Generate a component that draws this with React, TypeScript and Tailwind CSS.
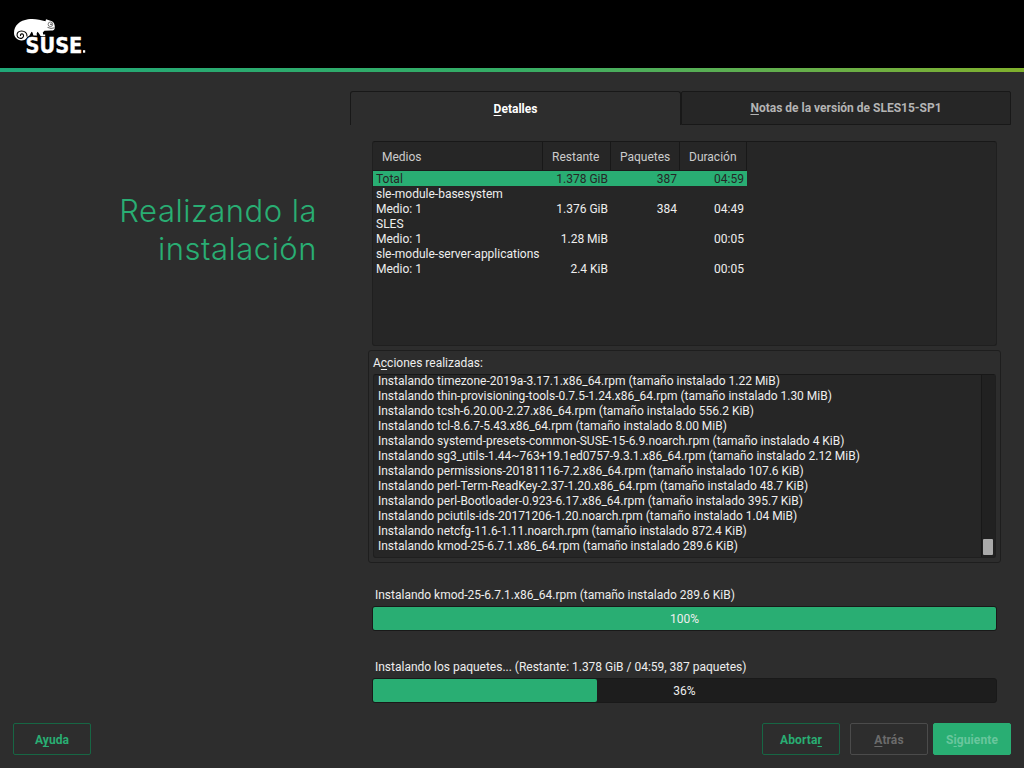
import type { ReactNode } from "react";

const mediaRows = [
  { name: "Total", size: "1.378 GiB", packages: "387", time: "04:59" },
  { name: "sle-module-basesystem", size: "", packages: "", time: "" },
  { name: "Medio: 1", size: "1.376 GiB", packages: "384", time: "04:49" },
  { name: "SLES", size: "", packages: "", time: "" },
  { name: "Medio: 1", size: "1.28 MiB", packages: "", time: "00:05" },
  { name: "sle-module-server-applications", size: "", packages: "", time: "" },
  { name: "Medio: 1", size: "2.4 KiB", packages: "", time: "00:05" },
];

const actions = [
  "Instalando timezone-2019a-3.17.1.x86_64.rpm (tamaño instalado 1.22 MiB)",
  "Instalando thin-provisioning-tools-0.7.5-1.24.x86_64.rpm (tamaño instalado 1.30 MiB)",
  "Instalando tcsh-6.20.00-2.27.x86_64.rpm (tamaño instalado 556.2 KiB)",
  "Instalando tcl-8.6.7-5.43.x86_64.rpm (tamaño instalado 8.00 MiB)",
  "Instalando systemd-presets-common-SUSE-15-6.9.noarch.rpm (tamaño instalado 4 KiB)",
  "Instalando sg3_utils-1.44~763+19.1ed0757-9.3.1.x86_64.rpm (tamaño instalado 2.12 MiB)",
  "Instalando permissions-20181116-7.2.x86_64.rpm (tamaño instalado 107.6 KiB)",
  "Instalando perl-Term-ReadKey-2.37-1.20.x86_64.rpm (tamaño instalado 48.7 KiB)",
  "Instalando perl-Bootloader-0.923-6.17.x86_64.rpm (tamaño instalado 395.7 KiB)",
  "Instalando pciutils-ids-20171206-1.20.noarch.rpm (tamaño instalado 1.04 MiB)",
  "Instalando netcfg-11.6-1.11.noarch.rpm (tamaño instalado 872.4 KiB)",
  "Instalando kmod-25-6.7.1.x86_64.rpm (tamaño instalado 289.6 KiB)",
];

function Key({ children }: { children: ReactNode }) {
  return <span className="underline decoration-1 underline-offset-2 [text-decoration-skip-ink:none]">{children}</span>;
}

function Logo() {
  return (
    <svg className="ml-3 mt-4 h-10 w-20" viewBox="12 16 80 40" role="img" aria-label="SUSE">
      <path
        fill="#fff"
        d="M14 33C14 25 20 20.500 28 19.200C34 18.300 40 19.500 45.500 21.200L46 19.200L52 21.200C54 22 55 24.800 54.800 28C54.700 29.700 53.500 30.500 51 30.600L44.500 30.800L42.800 32.500L43.200 34.500H45.200V36H40.500C39.500 34.500 39 33 37.500 31.800C36.500 33 36.500 34 37 35.500H33.500C32.500 33.500 33 32.500 31.500 31.800L29.500 35.600L27.200 37C26 39.500 24 40.400 21.500 40.400C17 40.200 14 37 14 33Z"
      />
      <path
        d="M27 36.500C27.200 33 24.800 31 21.500 31C18.200 31 16.700 33.200 17.100 35.600C17.500 38 20.300 39 22.200 37.900C24 36.900 24 34.200 22.200 33.900C20.700 33.700 20 35 20.800 36"
        fill="none"
        stroke="#000"
        strokeWidth="1.1"
      />
      <circle cx="50.400" cy="24.300" r="2.300" fill="#fff" stroke="#000" strokeWidth=".5" />
      <circle cx="51" cy="24.200" r=".7" fill="#000" />
      <path d="M54.500 27.800Q51 29.300 47.500 27.400" fill="none" stroke="#000" strokeWidth=".6" />
      <text
        x="25.500"
        y="52.500"
        textLength="56.800"
        lengthAdjust="spacingAndGlyphs"
        fill="#fff"
        stroke="#fff"
        strokeWidth=".4"
        fontFamily="DejaVu Sans, sans-serif"
        fontSize="20.500"
        fontWeight="700"
      >
        SUSE
      </text>
      <rect x="83" y="50.200" width="2.200" height="2.500" fill="#fff" />
    </svg>
  );
}

function Progress({ value }: { value: number }) {
  return (
    <div className="grid h-[25px] w-[625px] rounded-[3px] border border-[#191919] bg-[#1d1d1d]">
      <div
        className="col-start-1 row-start-1 rounded-[2px] bg-[#29ae73]"
        style={{ width: `${value}%` }}
      />
      <span className="z-10 col-start-1 row-start-1 pt-[5px] text-center leading-[15px] text-[#eeeeee]">{value}%</span>
    </div>
  );
}

const buttonBase = "flex h-8 w-[78px] items-center justify-center rounded-[2px] border pt-[2px] font-bold tracking-[0.1px]";

export default function App() {
  return (
    <div className="flex h-[768px] w-[1024px] flex-col overflow-hidden bg-[#2d2d2d] font-['Roboto',sans-serif] text-[12px] leading-[15px] text-[#eeeeee]">
      <header className="h-[68px] shrink-0 bg-black">
        <div className="flex">
          <Logo />
        </div>
      </header>
      <div className="h-1 shrink-0 bg-linear-to-r from-[#20a878] via-[#35ad65] to-[#80b02c]" />

      <div className="flex h-[651px] shrink-0">
        <aside className="w-[350px] shrink-0 pr-[33px] pt-[120px]">
          <h1 className="text-right font-['Inter',sans-serif] text-[31px] font-light leading-[38px] tracking-[0.5px] text-[#29ae73]">
            Realizando la
            <br />
            instalación
          </h1>
        </aside>

        <main className="w-[661px] pt-[19px]">
          <div className="flex h-[34px] font-bold">
            <div className="flex w-[331px] items-center justify-center rounded-t-[3px] border-x border-t border-[#181818] pt-px text-white">
              <span><Key>D</Key>etalles</span>
            </div>
            <div className="flex w-[330px] items-center justify-center rounded-t-[2px] border border-[#181818] bg-[#262626] text-[#b4b4b4]">
              <span><Key>N</Key>otas de la versión de SLES15-SP1</span>
            </div>
          </div>

          <div className="ml-[22px] mt-4 h-[205px] w-[625px] rounded-[3px] border border-[#1f1f1f] border-t-[#181818] bg-[#262626]">
            <div className="grid h-[29px] w-[374px] grid-cols-[170px_68px_69px_67px] border-b border-[#1b1b1b] text-[#cccccc]">
              {["Medios", "Restante", "Paquetes", "Duración"].map((title) => (
                <div key={title} className="flex items-center border-r border-[#181818] pl-[9px] pt-[2px]">
                  {title}
                </div>
              ))}
            </div>
            {mediaRows.map((row, i) => (
              <div
                key={i}
                className={
                  i === 0
                    ? "flex h-[15px] w-[374px] bg-[#29ae73] pt-px text-[#262626]"
                    : "flex h-[15px] w-[374px] pt-px"
                }
              >
                <span className="w-[170px] whitespace-nowrap pl-[3px]">{row.name}</span>
                <span className="w-[65px] text-right">{row.size}</span>
                <span className="w-[69px] text-right">{row.packages}</span>
                <span className="w-[67px] text-right">{row.time}</span>
              </div>
            ))}
          </div>

          <section className="ml-[18px] mt-1 h-[213px] w-[633px] rounded-[3px] border border-[#1e1e1e] px-1 pt-1">
            <div className="h-[19px] pt-px">A<Key>c</Key>ciones realizadas:</div>
            <div className="flex h-[184px] w-[623px] overflow-hidden rounded-[3px] border border-[#1f1f1f] border-t-[#181818] bg-[#262626]">
              <div className="-mt-px flex-1 whitespace-nowrap pl-1 tracking-[-0.012px]">
                {actions.map((action) => (
                  <div key={action} className="h-[15px]">{action}</div>
                ))}
              </div>
              <div className="flex w-[14px] items-end border-l border-[#181818] bg-[#212121] pb-[2px] pl-px">
                <div className="h-4 w-[10px] rounded-[1px] bg-[#aaaaaa]" />
              </div>
            </div>
          </section>

          <div className="ml-[22px] mt-6">
            <div className="h-[19px] pl-[3px] pt-px tracking-[-0.012px]">Instalando kmod-25-6.7.1.x86_64.rpm (tamaño instalado 289.6 KiB)</div>
            <Progress value={100} />
            <div className="mt-7 h-[19px] pl-[3px] pt-px tracking-[-0.012px]">Instalando los paquetes... (Restante: 1.378 GiB / 04:59, 387 paquetes)</div>
            <Progress value={36} />
          </div>
        </main>
      </div>

      <footer className="flex pl-[13px] pr-[13px]">
        <button className={`${buttonBase} border-[#176644] text-[#29ae73]`}>
          <span>A<Key>y</Key>uda</span>
        </button>
        <button className={`${buttonBase} ml-auto border-[#176644] text-[#29ae73]`}>
          <span>Aborta<Key>r</Key></span>
        </button>
        <button className={`${buttonBase} ml-[10px] border-[#4b4b4b] text-[#6b6b6b]`}>
          <span><Key>A</Key>trás</span>
        </button>
        <button className={`${buttonBase} ml-[5px] border-[#29ae73] bg-[#29ae73] text-[#69c69d]`}>
          <span>S<Key>i</Key>guiente</span>
        </button>
      </footer>
    </div>
  );
}
